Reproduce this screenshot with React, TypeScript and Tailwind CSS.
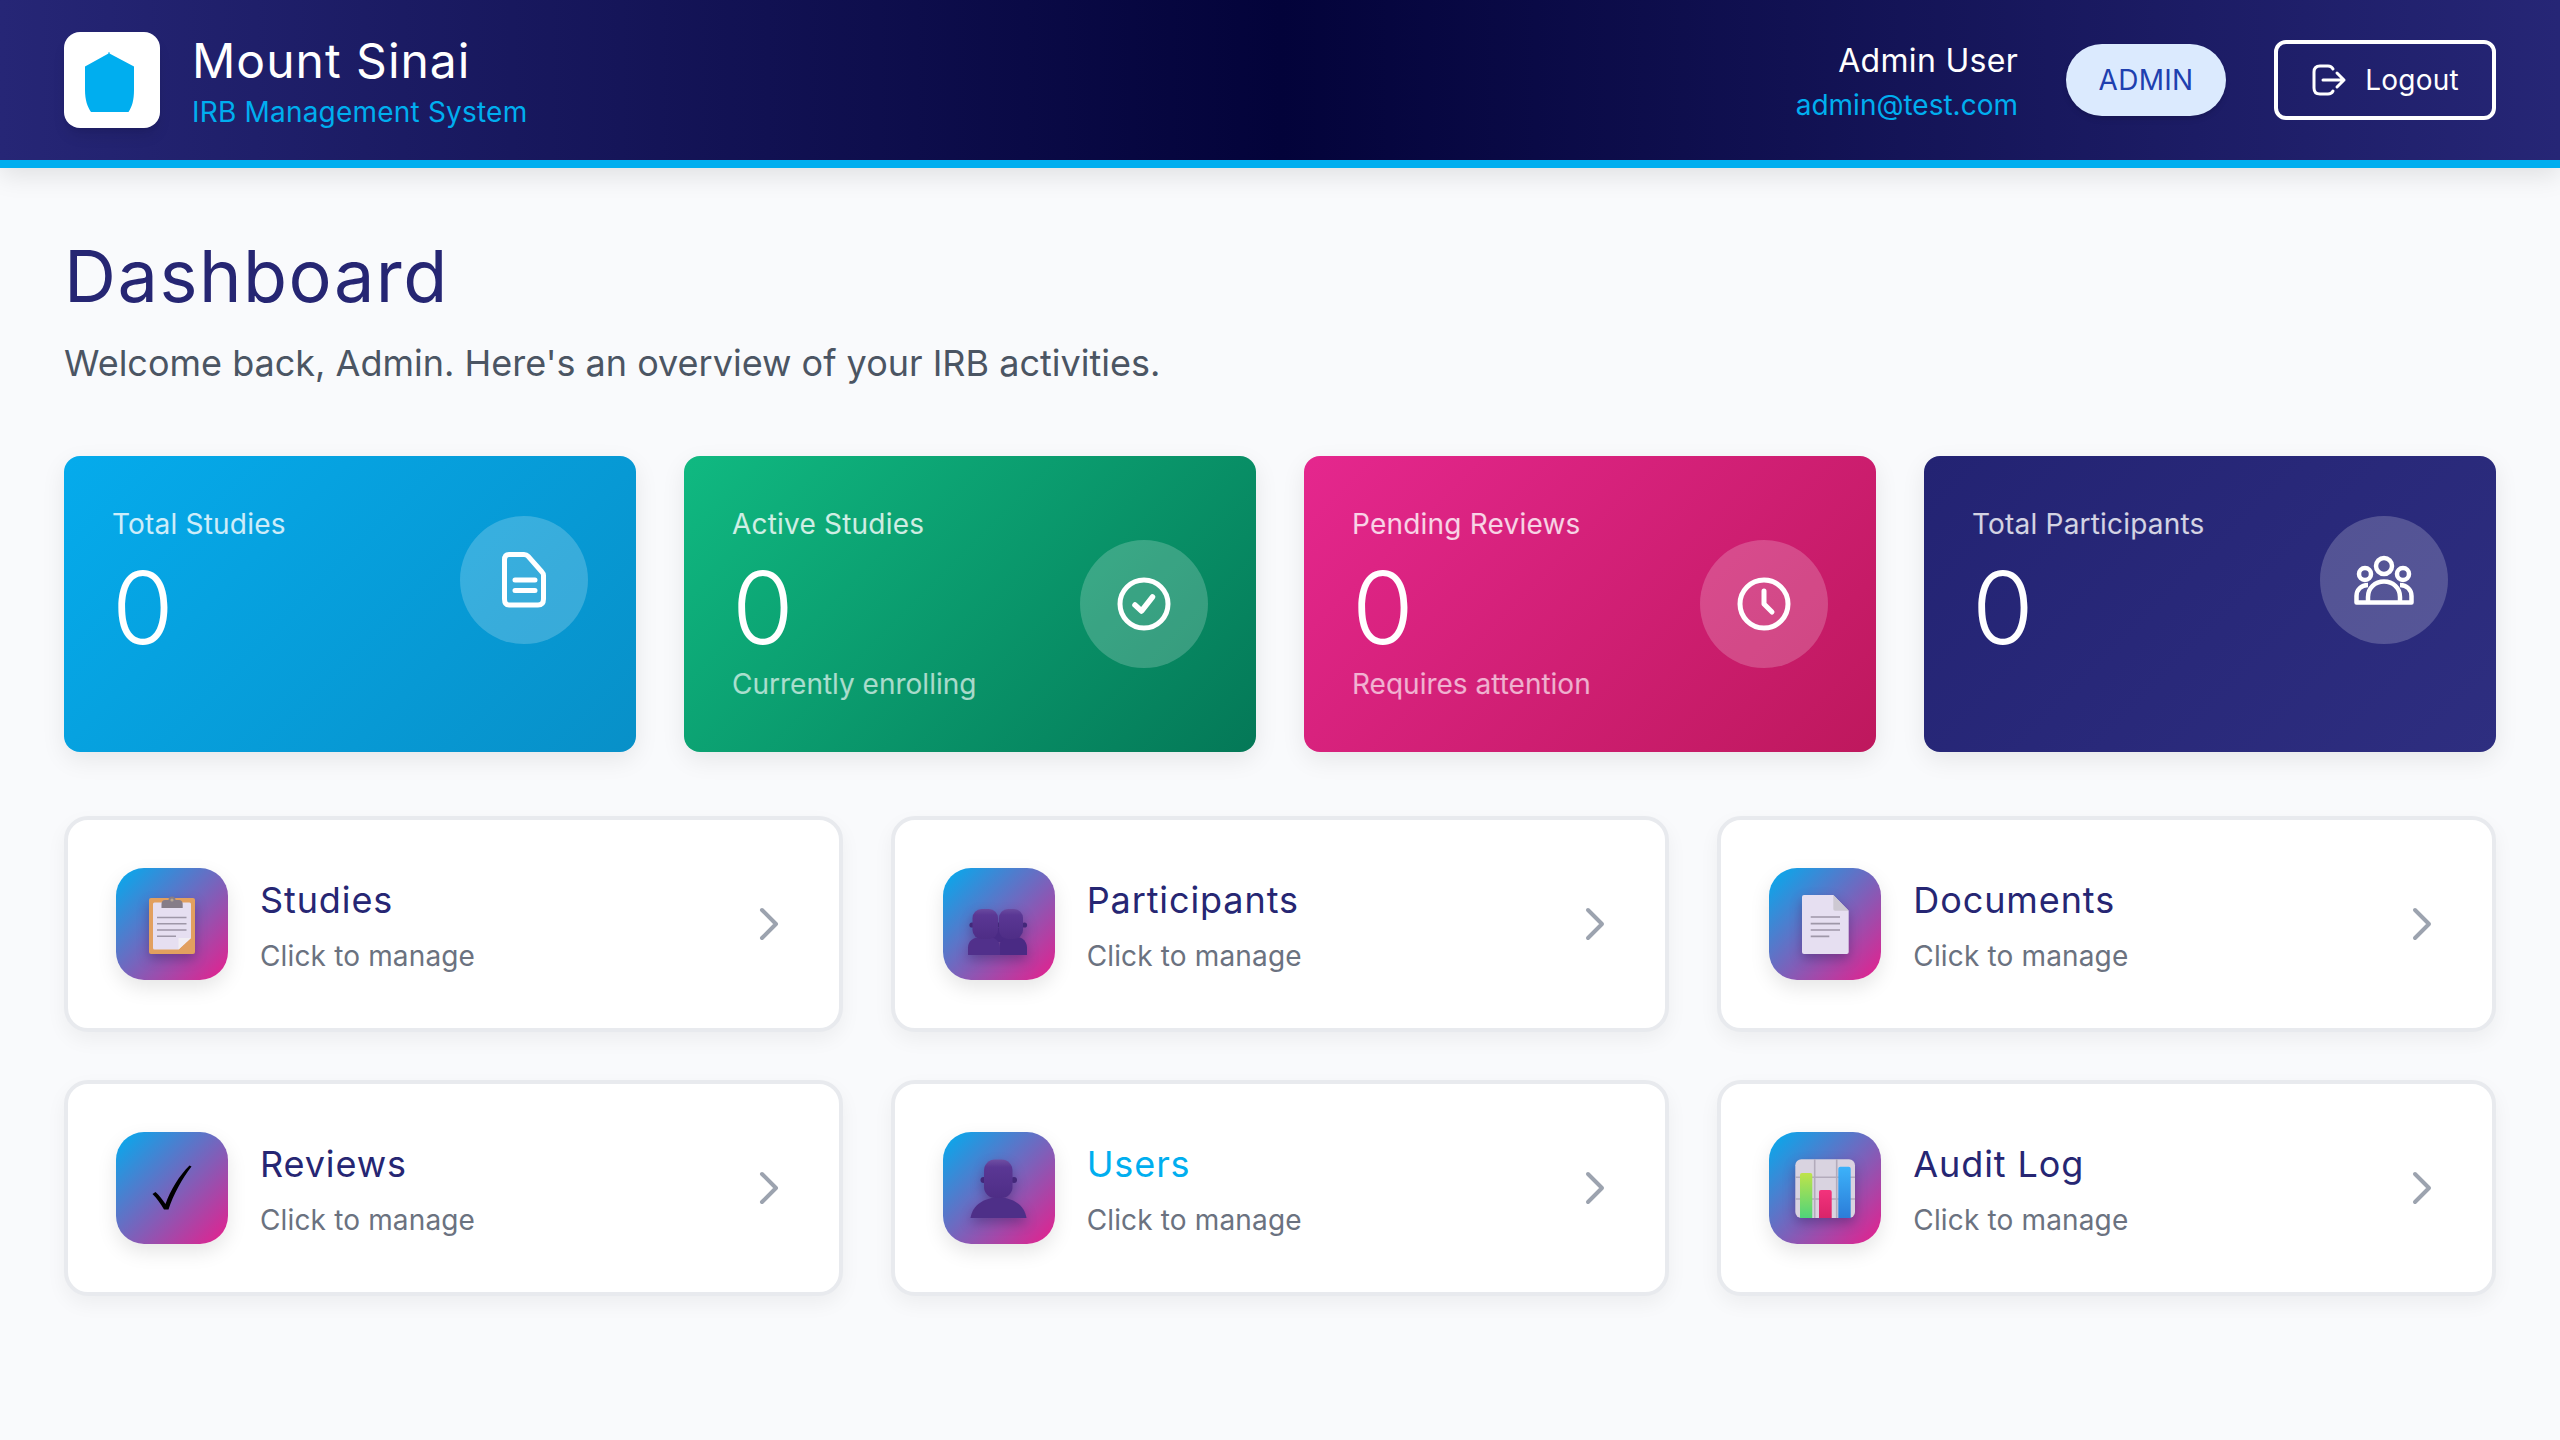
import React from "react";

const font = { fontFamily: "Inter, 'Liberation Sans', sans-serif" };

function Logo() {
  return (
    <svg width="96" height="96" viewBox="0 0 96 96">
      <path d="M44.5 21.5 L44 20.5 L46 20.5 L45.5 21.5 L70 34.5 L70 58 C70 68 68 75 64.5 80 L27 80 C23.5 75 21 68 21 58 L21 34.5 Z" fill="#00aeef" />
    </svg>
  );
}

function DocIcon() {
  return (
    <svg width="44" height="56" viewBox="0 0 44 56" fill="none" stroke="white" strokeWidth="5" strokeLinecap="round" strokeLinejoin="round">
      <path d="M7 2.5 H22 C24 2.5 25 3 26 4.2 L40 20 C41 21 41.5 22 41.5 23.5 V47 C41.5 51 39.5 53 36 53 H7 C4 53 2.5 51 2.5 47 V8 C2.5 4.5 4 2.5 7 2.5 Z" />
      <path d="M13 28 H33 M13 38.5 H33" />
    </svg>
  );
}

function CheckIcon() {
  return (
    <svg width="56" height="56" viewBox="0 0 56 56" fill="none" stroke="white" strokeLinecap="round" strokeLinejoin="round">
      <circle cx="28" cy="28" r="24" strokeWidth="5" />
      <path d="M19 29 L25.5 35 L36.5 21" strokeWidth="5.5" />
    </svg>
  );
}

function ClockIcon() {
  return (
    <svg width="56" height="56" viewBox="0 0 56 56" fill="none" stroke="white" strokeLinecap="round" strokeLinejoin="round">
      <circle cx="28" cy="28" r="24" strokeWidth="5" />
      <path d="M28 15 V28 L36 36" strokeWidth="5" />
    </svg>
  );
}

function GroupIcon() {
  return (
    <svg width="60" height="50" viewBox="0 0 60 50" fill="none" stroke="white" strokeWidth="4.5" strokeLinejoin="round">
      <circle cx="30" cy="11" r="8" />
      <circle cx="11" cy="19" r="6" />
      <circle cx="49" cy="19" r="6" />
      <path d="M14 47.5 V42 C14 33 21 26.5 30 26.5 C39 26.5 46 33 46 42 V47.5" />
      <path d="M14 30 C7 30 2.5 35 2.5 41 V47.5 H57.5 V41 C57.5 35 53 30 46 30" />
    </svg>
  );
}

function LogoutIcon() {
  return (
    <svg width="36" height="32" viewBox="0 0 36 32" fill="none" stroke="white" strokeWidth="3" strokeLinecap="round" strokeLinejoin="round">
      <path d="M22 5 C21 3 19.5 2 17 2 H9 C5 2 3 4 3 8 V24 C3 28 5 30 9 30 H17 C19.5 30 21 29 22 27" />
      <path d="M12 16 H33 M26 9 L33 16 L26 23" />
    </svg>
  );
}

function Chevron() {
  return (
    <svg width="48" height="48" viewBox="0 0 24 24" fill="none" stroke="#9ca3af" strokeWidth="2" strokeLinecap="round" strokeLinejoin="round" className="shrink-0">
      <path d="m9.5 19 7-7-7-7" />
    </svg>
  );
}

const shadow = "drop-shadow-[0_5px_6px_rgba(50,25,90,0.4)]";

function Clipboard() {
  return (
    <svg width="112" height="112" viewBox="0 0 112 112" className={shadow}>
      <rect x="33" y="30" width="46" height="56" rx="2" fill="#e2a05f" />
      <path d="M38.5 34.5 H73.5 A1.5 1.5 0 0 1 75 36 V70 L62.5 81.5 H38.5 A1.5 1.5 0 0 1 37 80 V36 A1.5 1.5 0 0 1 38.5 34.5 Z" fill="#e6dff1" />
      <path d="M62.5 70 H75 L62.5 81.5 Z" fill="#f1eef3" />
      <path d="M45.5 40 V36 C45.5 33.5 47 32 49 32 H52.5 A3.5 3.5 0 0 1 59.5 32 H63 C65 32 66.7 33.5 66.7 36 V40 Z" fill="#867d88" />
      <circle cx="56" cy="32" r="1.6" fill="#b7a893" />
      <g stroke="#9e97a8" strokeWidth="1.6">
        <path d="M41 49.5 H70.5 M41 55.8 H70.5 M41 62 H70.5 M41 68.3 H60" />
      </g>
    </svg>
  );
}

function Busts() {
  return (
    <svg width="112" height="112" viewBox="0 0 112 112" className={shadow}>
      <defs>
        <linearGradient id="b1" x1="0" y1="0" x2="0" y2="1">
          <stop offset="0" stopColor="#6a4aa0" />
          <stop offset="0.2" stopColor="#5a3794" />
          <stop offset="1" stopColor="#4e2d86" />
        </linearGradient>
      </defs>
      <rect x="44" y="60" width="24" height="14" fill="#4a2a84" />
      <circle cx="29" cy="57" r="2.6" fill="#43287a" />
      <circle cx="55.5" cy="57" r="2.6" fill="#43287a" />
      <circle cx="81.5" cy="57" r="2.6" fill="#43287a" />
      <path d="M25 87 V80 C25 73 30 69 38 69 H46 C52 69 57 73 57 80 V87 Z" fill="#51308b" />
      <path d="M57 87 V75 C59 71 64 69 70 69 H74 C80 69 84 74 84 80 V87 Z" fill="#4a2a84" />
      <rect x="29.5" y="41" width="25.5" height="30" rx="9" fill="url(#b1)" />
      <rect x="56" y="41" width="24" height="30" rx="9" fill="url(#b1)" />
    </svg>
  );
}

function Page() {
  return (
    <svg width="112" height="112" viewBox="0 0 112 112" className={shadow}>
      <path d="M35 27 H64.3 L79.7 42.7 V84 A2 2 0 0 1 77.7 86 H35 A2 2 0 0 1 33 84 V29 A2 2 0 0 1 35 27 Z" fill="#e6dff1" />
      <path d="M64.3 27 L79.7 42.7 H66 A1.7 1.7 0 0 1 64.3 41 Z" fill="#cdc8d2" />
      <path d="M41.7 49 H71 M41.7 55.7 H71 M41.7 62 H71 M41.7 68.3 H60.3" stroke="#9e97a8" strokeWidth="1.7" />
    </svg>
  );
}

function Tick() {
  return (
    <svg width="112" height="112" viewBox="0 0 112 112">
      <path d="M36.5 62 L39.5 60 C43 63 46.5 67.5 49.5 72 C54.5 58 63 44 73.5 33.5 L75.5 34.5 C66 47 57.5 62 52.5 77.5 L48 77.5 C45 72 41 66.5 36.5 62 Z" fill="#000" />
    </svg>
  );
}

function Bust() {
  return (
    <svg width="112" height="112" viewBox="0 0 112 112" className={shadow}>
      <defs>
        <linearGradient id="b2" x1="0" y1="0" x2="0" y2="1">
          <stop offset="0" stopColor="#6f4fa3" />
          <stop offset="0.2" stopColor="#5a3794" />
          <stop offset="1" stopColor="#4e2d86" />
        </linearGradient>
      </defs>
      <circle cx="40.5" cy="48" r="3" fill="#43287a" />
      <circle cx="71" cy="48" r="3" fill="#43287a" />
      <path d="M27.5 86 C29.5 73 41 65.5 55.5 65.5 C70 65.5 81.5 73 83.5 86 Z" fill="#4e2f88" />
      <rect x="41" y="27.5" width="28.5" height="38.5" rx="11" fill="url(#b2)" />
    </svg>
  );
}

function Chart() {
  return (
    <svg width="112" height="112" viewBox="0 0 112 112" className={shadow}>
      <defs>
        <linearGradient id="gg" x1="0" y1="0" x2="0" y2="1">
          <stop offset="0" stopColor="#bfe34a" />
          <stop offset="1" stopColor="#4fd47a" />
        </linearGradient>
        <linearGradient id="gp" x1="0" y1="0" x2="0" y2="1">
          <stop offset="0" stopColor="#f3337c" />
          <stop offset="1" stopColor="#d9246a" />
        </linearGradient>
        <linearGradient id="gb" x1="0" y1="0" x2="0" y2="1">
          <stop offset="0" stopColor="#3cb2fa" />
          <stop offset="1" stopColor="#2c7cd8" />
        </linearGradient>
      </defs>
      <rect x="26.3" y="27.3" width="59.7" height="58.7" rx="6" fill="#d9d3e0" />
      <path d="M45.7 27.3 V86 M67.7 27.3 V86 M26.3 45.3 H86 M26.3 67 H86" stroke="#b3abbb" strokeWidth="1.6" />
      <path d="M31 86 V43 A2 2 0 0 1 33 41 H41.3 A2 2 0 0 1 43.3 43 V86 Z" fill="url(#gg)" />
      <path d="M50 86 V60 A2 2 0 0 1 52 58 H60.7 A2 2 0 0 1 62.7 60 V86 Z" fill="url(#gp)" />
      <path d="M69.3 86 V36.7 A2 2 0 0 1 71.3 34.7 H79.7 A2 2 0 0 1 81.7 36.7 V86 Z" fill="url(#gb)" />
    </svg>
  );
}

function Stat({ label, sub, bg, icon }: { label: string; sub?: string; bg: string; icon: React.ReactNode }) {
  return (
    <div className={`h-[296px] rounded-[16px] p-12 shadow-[0_8px_24px_rgba(0,0,0,0.08)] ${bg}`}>
      <div className="flex items-center justify-between">
        <div>
          <div className="text-[28px] leading-[40px] tracking-[0.2px] text-white/80">{label}</div>
          <div className="mt-4 text-[100px] font-[350] leading-[96px] text-white">0</div>
          {sub && <div className="mt-2 text-[28px] leading-[40px] text-white/65">{sub}</div>}
        </div>
        <div className="flex h-32 w-32 items-center justify-center rounded-full bg-white/20">{icon}</div>
      </div>
    </div>
  );
}

function Action({ title, icon, titleColor }: { title: string; icon: React.ReactNode; titleColor: string }) {
  return (
    <div className="flex h-[216px] items-center rounded-[24px] border-4 border-[#e8eaee] bg-white p-12 shadow-[0_8px_20px_rgba(0,0,0,0.05)]">
      <div className="flex h-28 w-28 shrink-0 items-center justify-center rounded-[28px] bg-[linear-gradient(135deg,#00adef,#e91e8c)] shadow-[0_8px_20px_rgba(0,0,0,0.1)]">
        {icon}
      </div>
      <div className="ml-8 flex-1">
        <div className="pt-[3px]">
          <div className={`text-[36px] leading-[48px] tracking-[0.9px] ${titleColor}`}>{title}</div>
          <div className="mt-3 text-[28px] leading-[40px] tracking-[0.15px] text-[#6b7280]">Click to manage</div>
        </div>
      </div>
      <Chevron />
    </div>
  );
}

export default function App() {
  return (
    <div style={font} className="min-h-[1440px] bg-[#f9fafc]">
      <header className="flex h-[168px] items-center justify-between border-b-8 border-[#00aeef] bg-[linear-gradient(90deg,#262676,#03033a_50%,#262676)] px-16 shadow-[0_8px_24px_rgba(0,0,0,0.1)]">
        <div className="flex items-center gap-8">
          <div className="flex h-24 w-24 items-center justify-center rounded-[16px] bg-white shadow-lg"><Logo /></div>
          <div className="pt-[2px]">
            <div className="text-[48px] leading-[56px] tracking-[1px] text-white">Mount Sinai</div>
            <div className="mt-[5px] text-[28px] leading-[36px] tracking-[0.2px] text-[#00aeef]">IRB Management System</div>
          </div>
        </div>
        <div className="flex items-center gap-12">
          <div className="pt-[3px] text-right">
            <div className="text-[32px] leading-[44px] tracking-[0.3px] text-white">Admin User</div>
            <div className="mt-[3px] text-[28px] leading-[38px] text-[#00aeef]">admin@test.com</div>
          </div>
          <div className="flex h-[72px] w-[160px] items-center justify-center rounded-full bg-[#dbeafe] text-[28px] tracking-[0.3px] text-[#1e40af] shadow-md">ADMIN</div>
          <div className="flex h-20 w-[222px] items-center justify-center gap-[18px] rounded-[12px] border-4 border-white text-[28px] tracking-[0.2px] text-white">
            <LogoutIcon />
            <span>Logout</span>
          </div>
        </div>
      </header>
      <main className="px-16 pt-[64px]">
        <h1 className="text-[72px] leading-[88px] tracking-[1.5px] text-[#262673]">Dashboard</h1>
        <p className="mt-[19px] text-[36px] leading-[48px] text-[#4b5563]">Welcome back, Admin. Here's an overview of your IRB activities.</p>
        <div className="mt-[69px] grid grid-cols-4 gap-12">
          <Stat label="Total Studies" bg="bg-[linear-gradient(135deg,#05abec,#0890c8)]" icon={<DocIcon />} />
          <Stat label="Active Studies" sub="Currently enrolling" bg="bg-[linear-gradient(135deg,#10b981,#047857)]" icon={<CheckIcon />} />
          <Stat label="Pending Reviews" sub="Requires attention" bg="bg-[linear-gradient(135deg,#e5278e,#be185d)]" icon={<ClockIcon />} />
          <Stat label="Total Participants" bg="bg-[linear-gradient(135deg,#232373,#2e2e80)]" icon={<GroupIcon />} />
        </div>
        <div className="mt-16 grid grid-cols-3 gap-12">
          <Action title="Studies" titleColor="text-[#262673]" icon={<Clipboard />} />
          <Action title="Participants" titleColor="text-[#262673]" icon={<Busts />} />
          <Action title="Documents" titleColor="text-[#262673]" icon={<Page />} />
          <Action title="Reviews" titleColor="text-[#262673]" icon={<Tick />} />
          <Action title="Users" titleColor="text-[#00aeef]" icon={<Bust />} />
          <Action title="Audit Log" titleColor="text-[#262673]" icon={<Chart />} />
        </div>
      </main>
    </div>
  );
}
